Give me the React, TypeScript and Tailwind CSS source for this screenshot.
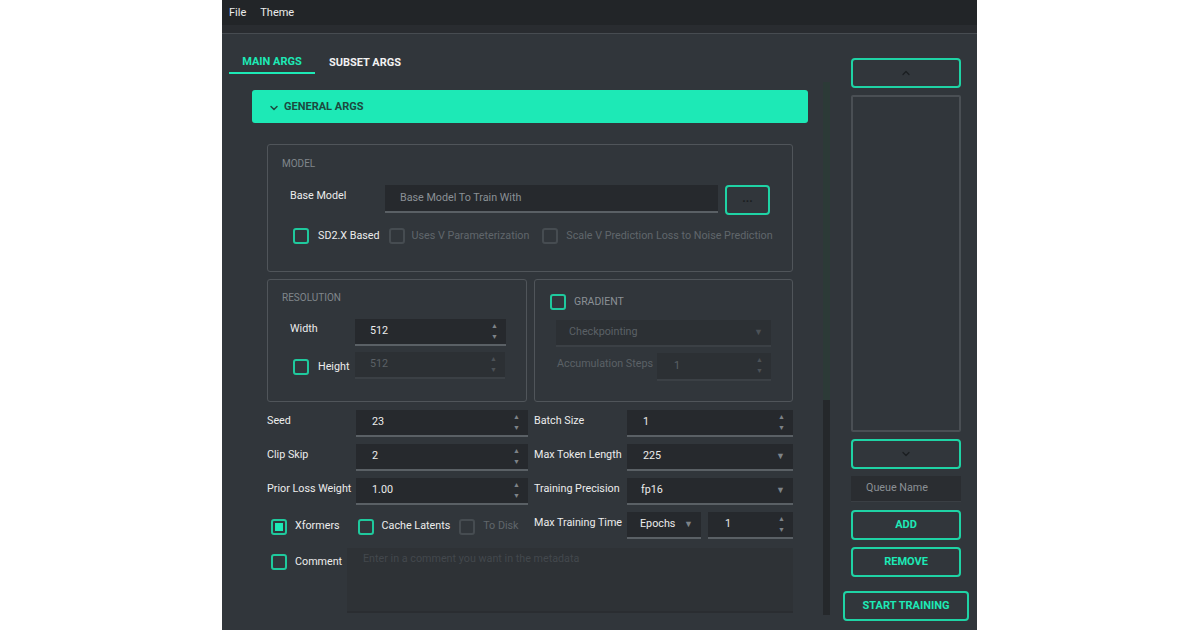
import { ChevronDown, ChevronUp } from 'lucide-react'

const font = { fontFamily: 'Roboto, "Liberation Sans", sans-serif' }

function Check({ on = false, disabled = false, checked = false }: { on?: boolean; disabled?: boolean; checked?: boolean }) {
  return (
    <div
      className={`flex h-[16px] w-[16px] shrink-0 items-center justify-center rounded-[3px] border-2 ${
        disabled ? 'border-[#464c51]' : on ? 'border-[#1fc99d]' : 'border-[#464c51]'
      }`}
    >
      {checked && <div className="h-[8px] w-[8px] bg-[#1de9b6]" />}
    </div>
  )
}

function Spin({ value, disabled = false, className = '' }: { value: string; disabled?: boolean; className?: string }) {
  return (
    <div
      className={`relative flex h-[27px] items-center border-b-2 pl-[15px] text-[10.75px] ${
        disabled ? 'border-[#3b4045] bg-[#2c3034] text-[#5b6166]' : 'border-[#5a6065] bg-[#26292d] text-[#ececec]'
      } ${className}`}
    >
      {value}
      <div className={`absolute right-[8px] top-[2px] flex flex-col text-[7px] leading-[11px] ${disabled ? 'text-[#4c5257]' : 'text-[#7d8388]'}`}>
        <span>▲</span>
        <span>▼</span>
      </div>
    </div>
  )
}

function Select({ value, disabled = false, className = '' }: { value: string; disabled?: boolean; className?: string }) {
  return (
    <div
      className={`flex h-[27px] items-center justify-between border-b-2 pl-[13px] pr-[8px] text-[10.75px] ${
        disabled ? 'border-[#3b4045] bg-[#2c3034] text-[#5b6166]' : 'border-[#5a6065] bg-[#26292d] text-[#ececec]'
      } ${className}`}
    >
      <span>{value}</span>
      <span className={`text-[9px] ${disabled ? 'text-[#4c5257]' : 'text-[#7d8388]'}`}>▼</span>
    </div>
  )
}

function OutlineBtn({ children, className = '' }: { children?: React.ReactNode; className?: string }) {
  return (
    <div
      className={`flex h-[30px] items-center justify-center rounded-[4px] border-2 border-[#1fd3a5] text-[11px] font-bold text-[#1de9b6] ${className}`}
    >
      {children}
    </div>
  )
}

export default function App() {
  return (
    <div className="h-[630px] w-[1200px] overflow-hidden bg-white" style={font}>
      <div className="ml-[222px] flex h-[630px] w-[755px] flex-col bg-[#31363b]">
        {/* Menu */}
        <div className="flex h-[25px] items-center gap-[14px] bg-[#222528] pl-[7px] pt-[2px] text-[11px] text-[#ececec]">
          <span>File</span>
          <span>Theme</span>
        </div>
        <div className="h-[8px] bg-[#292c30]" />
        <div className="h-[1px] bg-[#474c51]" />

        <div className="flex flex-1 pl-[7px] pr-[8px]">
          {/* Left column */}
          <div className="flex w-[601px] flex-col">
            <div className="mt-[16px] flex h-[24px] text-[11px] font-bold">
              <div className="flex w-[86px] items-center justify-center border-b-2 border-[#1de9b6] pt-[2px] text-[#1de9b6]">
                MAIN ARGS
              </div>
              <div className="flex w-[100px] items-center justify-center pt-[2px] text-[#f2f2f2]">SUBSET ARGS</div>
            </div>

            <div className="mt-[8px] flex h-[533px]">
              <div className="flex w-[594px] flex-col pl-[23px] pr-[15px]">
                {/* General args header */}
                <div className="mt-[8px] flex h-[33px] items-center gap-[4px] rounded-[3px] bg-[#1de9b6] pl-[16px] pt-[2px] text-[11px] font-bold text-[#1c4a3f]">
                  <ChevronDown size={12} strokeWidth={3} />
                  GENERAL ARGS
                </div>

                <div className="flex flex-col px-[15px] text-[10.75px]">
                  {/* Model */}
                  <div className="mt-[21px] h-[128px] rounded-[3px] border border-[#50555a] pl-[14px]">
                    <div className="mt-[13px] text-[10px] leading-[12px] text-[#80868b]">MODEL</div>
                    <div className="mt-[15px] flex">
                      <div className="w-[103px] pl-[8px] pt-[3px] leading-[16px] text-[#ececec]">Base Model</div>
                      <div className="flex h-[28px] w-[333px] items-center border-b-2 border-[#5a6065] bg-[#26292d] pl-[15px] text-[#8a9095]">
                        Base Model To Train With
                      </div>
                      <OutlineBtn className="ml-[7px] h-[29px] w-[45px] rounded-[3px]">
                        <span className="pb-[4px] text-[12px] font-bold text-[#1b1e21]">...</span>
                      </OutlineBtn>
                    </div>
                    <div className="mt-[13px] flex items-center pl-[11px]">
                      <Check on />
                      <span className="ml-[9px] text-[#ececec]">SD2.X Based</span>
                      <div className="ml-[9px]">
                        <Check disabled />
                      </div>
                      <span className="ml-[7px] text-[#60666b]">Uses V Parameterization</span>
                      <div className="ml-[13px]">
                        <Check disabled />
                      </div>
                      <span className="ml-[8px] text-[#60666b]">Scale V Prediction Loss to Noise Prediction</span>
                    </div>
                  </div>

                  {/* Resolution / Gradient */}
                  <div className="mt-[7px] flex gap-[7px]">
                    <div className="h-[123px] w-[260px] rounded-[3px] border border-[#50555a] pl-[14px]">
                      <div className="mt-[12px] text-[10px] leading-[12px] text-[#80868b]">RESOLUTION</div>
                      <div className="mt-[15px] flex">
                        <div className="w-[73px] pl-[8px] pt-[2px] leading-[16px] text-[#ececec]">Width</div>
                        <Spin value="512" className="w-[151px]" />
                      </div>
                      <div className="mt-[6px] flex items-center">
                        <div className="ml-[11px] mt-[3px]">
                          <Check on />
                        </div>
                        <span className="ml-[9px] mt-[3px] w-[37px] text-[#ececec]">Height</span>
                        <Spin value="512" disabled className="w-[150px]" />
                      </div>
                    </div>
                    <div className="h-[123px] w-[259px] rounded-[3px] border border-[#50555a] pl-[15px]">
                      <div className="mt-[14px] flex items-center">
                        <Check on />
                        <span className="ml-[8px] text-[10.5px] text-[#8a9095]">GRADIENT</span>
                      </div>
                      <Select value="Checkpointing" disabled className="ml-[6px] mt-[10px] w-[215px]" />
                      <div className="mt-[6px] flex">
                        <div className="w-[107px] whitespace-nowrap pl-[7px] pt-[3px] leading-[16px] text-[#5b6166]">Accumulation Steps</div>
                        <Spin value="1" disabled className="h-[28px] w-[114px] pl-[17px]" />
                      </div>
                    </div>
                  </div>

                  {/* Main grid */}
                  <div className="mt-[8px] grid grid-cols-[89px_178px_93px_166px] gap-y-[7px] text-[#ececec]">
                    <div className="self-center pb-[4px]">Seed</div>
                    <Spin value="23" className="w-[172px] pl-[16px]" />
                    <div className="self-center pb-[4px]">Batch Size</div>
                    <Spin value="1" className="pl-[16px]" />

                    <div className="self-center pb-[4px]">Clip Skip</div>
                    <Spin value="2" className="w-[172px] pl-[16px]" />
                    <div className="self-center pb-[4px]">Max Token Length</div>
                    <Select value="225" className="pl-[16px]" />

                    <div className="self-center whitespace-nowrap pb-[4px]">Prior Loss Weight</div>
                    <Spin value="1.00" className="w-[172px] pl-[16px]" />
                    <div className="self-center pb-[4px]">Training Precision</div>
                    <Select value="fp16" className="pl-[14px]" />

                    <div className="col-span-2 flex items-center pl-[4px] pt-[2px]">
                      <Check on checked />
                      <span className="ml-[8px]">Xformers</span>
                      <div className="ml-[18px]">
                        <Check on />
                      </div>
                      <span className="ml-[8px]">Cache Latents</span>
                      <div className="ml-[9px]">
                        <Check disabled />
                      </div>
                      <span className="ml-[8px] text-[#60666b]">To Disk</span>
                    </div>
                    <div className="self-center whitespace-nowrap pb-[4px]">Max Training Time</div>
                    <div className="flex gap-[7px]">
                      <Select value="Epochs" className="w-[74px] pl-[13px]" />
                      <Spin value="1" className="w-[85px] pl-[17px]" />
                    </div>
                  </div>

                  {/* Comment */}
                  <div className="mt-[9px] flex">
                    <div className="flex w-[80px] items-start pl-[4px] pt-[6px]">
                      <Check on />
                      <span className="ml-[8px] leading-[16px] text-[#ececec]">Comment</span>
                    </div>
                    <div className="h-[65px] w-[446px] border-b-2 border-[#2a2d31] bg-[#2e3236] pl-[16px] pt-[3px] text-[#43484d]">
                      Enter in a comment you want in the metadata
                    </div>
                  </div>
                </div>
              </div>
              {/* Scrollbar */}
              <div className="flex w-[7px] flex-col bg-[#25282b]">
                <div className="h-[318px] bg-[#2c3a37]" />
              </div>
            </div>
          </div>

          {/* Right column */}
          <div className="ml-[13px] flex w-[126px] flex-col items-center">
            <OutlineBtn className="mt-[24px] w-[110px]">
              <ChevronUp size={12} strokeWidth={2.5} className="text-[#1b1e21]" />
            </OutlineBtn>
            <div className="mt-[7px] h-[337px] w-[110px] rounded-[2px] border-2 border-[#4a4f54]" />
            <OutlineBtn className="mt-[7px] w-[110px]">
              <ChevronDown size={12} strokeWidth={2.5} className="text-[#1b1e21]" />
            </OutlineBtn>
            <div className="mt-[7px] flex h-[26px] w-[110px] items-center border-b border-[#3a3f44] bg-[#2a2d31] pl-[15px] text-[10.75px] text-[#8a9095]">
              Queue Name
            </div>
            <OutlineBtn className="mt-[8px] w-[110px]">ADD</OutlineBtn>
            <OutlineBtn className="mt-[7px] w-[110px]">REMOVE</OutlineBtn>
            <OutlineBtn className="mt-[14px] w-[126px]">START TRAINING</OutlineBtn>
          </div>
        </div>
      </div>
    </div>
  )
}
